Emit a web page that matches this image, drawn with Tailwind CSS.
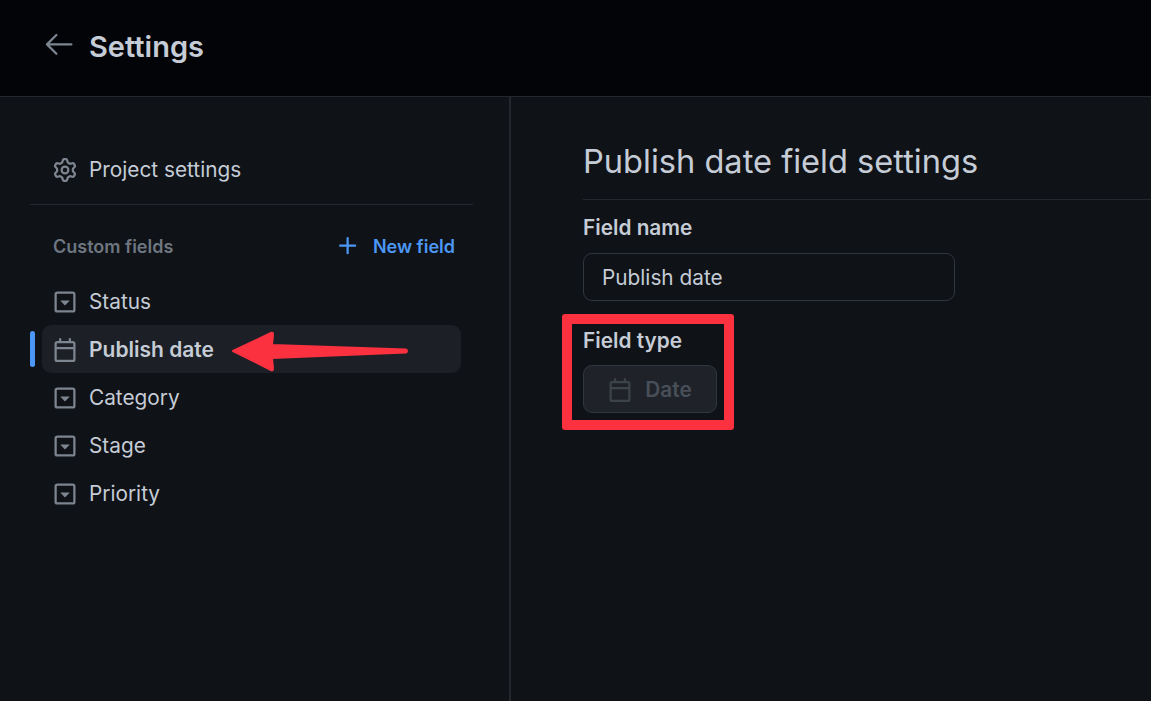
<!doctype html>
<html lang="en">
<head>
<meta charset="UTF-8" />
<title>Settings</title>
<script src="https://cdn.jsdelivr.net/npm/@tailwindcss/browser@4"></script>
</head>
<body class="relative w-[1151px] h-[701px] overflow-hidden bg-[#0f1216] font-['Inter','Liberation_Sans',sans-serif] text-[#c5ccd6]">
  <!-- header -->
  <header class="h-[97px] bg-[#020408] border-b border-[#24282e] flex items-center pl-[41px] pb-[3px]">
    <svg class="w-[36px] h-[36px] fill-[#7d8590] -mt-[6px]" viewBox="0 0 24 24"><path d="M10.78 19.03a.75.75 0 0 1-1.06 0l-6.25-6.25a.75.75 0 0 1 0-1.06l6.25-6.25a.749.749 0 0 1 1.275.326.749.749 0 0 1-.215.734L5.81 11.5h14.44a.75.75 0 0 1 0 1.5H5.81l4.97 4.97a.75.75 0 0 1 0 1.06Z"/></svg>
    <h1 class="ml-[12px] text-[29px] font-semibold leading-[36px]">Settings</h1>
  </header>

  <div class="flex h-[604px]">
    <!-- sidebar -->
    <aside class="w-[511px] shrink-0 border-r-2 border-[#24282e] pt-[49px] pl-[30px] pr-[36px]">
      <div class="flex items-center h-[48px] pl-[23px] text-[20.8px]">
        <svg class="w-[24px] h-[24px] fill-[#7d8590]" viewBox="0 0 16 16"><path d="M8 0a8.2 8.2 0 0 1 .701.031C9.444.095 9.99.645 10.16 1.29l.288 1.107c.018.066.079.158.212.224.231.114.454.243.668.386.123.082.233.09.299.071l1.103-.303c.644-.176 1.392.021 1.82.63.27.385.506.792.704 1.218.315.675.111 1.422-.364 1.891l-.814.806c-.049.048-.098.147-.088.294.016.257.016.515 0 .772-.01.147.038.246.088.294l.814.806c.475.469.679 1.216.364 1.891a7.977 7.977 0 0 1-.704 1.217c-.428.61-1.176.807-1.82.63l-1.102-.302c-.067-.019-.177-.011-.3.071a5.909 5.909 0 0 1-.668.386c-.133.066-.194.158-.211.224l-.29 1.106c-.168.646-.715 1.196-1.458 1.26a8.006 8.006 0 0 1-1.402 0c-.743-.064-1.289-.614-1.458-1.26l-.289-1.106c-.018-.066-.079-.158-.212-.224a5.738 5.738 0 0 1-.668-.386c-.123-.082-.233-.09-.299-.071l-1.103.303c-.644.176-1.392-.021-1.82-.63a8.12 8.12 0 0 1-.704-1.218c-.315-.675-.111-1.422.363-1.891l.815-.806c.05-.048.098-.147.088-.294a6.214 6.214 0 0 1 0-.772c.01-.147-.038-.246-.088-.294l-.815-.806C.635 6.045.431 5.298.746 4.623a7.92 7.92 0 0 1 .704-1.217c.428-.61 1.176-.807 1.82-.63l1.102.302c.067.019.177.011.3-.071.214-.143.437-.272.668-.386.133-.066.194-.158.211-.224l.29-1.106C6.009.645 6.556.095 7.299.03 7.53.01 7.764 0 8 0Zm-.571 1.525c-.036.003-.108.036-.137.146l-.289 1.105c-.147.561-.549.967-.998 1.189-.173.086-.34.183-.5.29-.417.278-.97.423-1.529.27l-1.103-.303c-.109-.03-.175.016-.195.045-.22.312-.412.644-.573.99-.014.031-.021.11.059.19l.815.806c.411.406.562.957.53 1.456a4.709 4.709 0 0 0 0 .582c.032.499-.119 1.05-.53 1.456l-.815.806c-.081.08-.073.159-.059.19.162.346.353.677.573.989.02.03.085.076.195.046l1.102-.303c.56-.153 1.113-.008 1.53.27.161.107.328.204.501.29.447.222.85.629.997 1.189l.289 1.105c.029.109.101.143.137.146a6.6 6.6 0 0 0 1.142 0c.036-.003.108-.036.137-.146l.289-1.105c.147-.561.549-.967.998-1.189.173-.086.34-.183.5-.29.417-.278.97-.423 1.529-.27l1.103.303c.109.029.175-.016.195-.045.22-.313.411-.644.573-.99.014-.031.021-.11-.059-.19l-.815-.806c-.411-.406-.562-.957-.53-1.456a4.709 4.709 0 0 0 0-.582c-.032-.499.119-1.05.53-1.456l.815-.806c.081-.08.073-.159.059-.19a6.464 6.464 0 0 0-.573-.989c-.02-.03-.085-.076-.195-.046l-1.102.303c-.56.153-1.113.008-1.53-.27a4.44 4.44 0 0 0-.501-.29c-.447-.222-.85-.629-.997-1.189l-.289-1.105c-.029-.11-.101-.143-.137-.146a6.6 6.6 0 0 0-1.142 0ZM11 8a3 3 0 1 1-6 0 3 3 0 0 1 6 0ZM9.5 8a1.5 1.5 0 1 0-3.001.001A1.5 1.5 0 0 0 9.5 8Z"/></svg>
        <span class="ml-[12px]">Project settings</span>
      </div>
      <div class="mt-[10px] border-t border-[#24282e]"></div>

      <div class="flex items-center justify-between h-[48px] mt-[17px] pl-[23px] pr-[18px] text-[18px] font-semibold">
        <span class="text-[#6e7681]">Custom fields</span>
        <span class="flex items-center text-[#4c97f5]">
          <svg class="w-[24px] h-[24px] fill-[#4c97f5]" viewBox="0 0 16 16"><path d="M7.75 2a.75.75 0 0 1 .75.75V7h4.25a.75.75 0 0 1 0 1.5H8.5v4.25a.75.75 0 0 1-1.5 0V8.5H2.75a.75.75 0 0 1 0-1.5H7V2.75A.75.75 0 0 1 7.75 2Z"/></svg>
          <span class="ml-[13px]">New field</span>
        </span>
      </div>

      <ul class="mt-[7px] text-[20.8px]">
        <li class="flex items-center h-[48px] pl-[23px] pt-[2px]">
          <svg class="w-[24px] h-[24px] fill-[#7d8590]" viewBox="0 0 16 16"><path d="m5.06 7.356 2.795 2.833c.08.081.21.081.29 0l2.794-2.833c.13-.131.038-.356-.145-.356H5.206c-.183 0-.275.225-.145.356Z"/><path d="M1 2.75C1 1.784 1.784 1 2.75 1h10.5c.966 0 1.75.784 1.75 1.75v10.5A1.75 1.75 0 0 1 13.25 15H2.75A1.75 1.75 0 0 1 1 13.25Zm1.75-.25a.25.25 0 0 0-.25.25v10.5c0 .138.112.25.25.25h10.5a.25.25 0 0 0 .25-.25V2.75a.25.25 0 0 0-.25-.25Z"/></svg>
          <span class="ml-[12px]">Status</span>
        </li>
        <li class="relative flex items-center h-[48px] ml-[12px] mr-[12px] pl-[11px] pt-[2px] rounded-[9px] bg-[#1c1f25] font-semibold text-[21px]">
          <span class="absolute -left-[12px] top-[6px] w-[5px] h-[36px] rounded-full bg-[#4c97f5]"></span>
          <svg class="w-[24px] h-[24px] fill-[#7d8590]" viewBox="0 0 16 16"><path d="M4.75 0a.75.75 0 0 1 .75.75V2h5V.75a.75.75 0 0 1 1.5 0V2h1.25c.966 0 1.75.784 1.75 1.75v10.5A1.75 1.75 0 0 1 13.25 16H2.75A1.75 1.75 0 0 1 1 14.25V3.75C1 2.784 1.784 2 2.75 2H4V.75A.75.75 0 0 1 4.75 0ZM2.5 7.5v6.75c0 .138.112.25.25.25h10.5a.25.25 0 0 0 .25-.25V7.5Zm10.75-4H2.75a.25.25 0 0 0-.25.25V6h11V3.75a.25.25 0 0 0-.25-.25Z"/></svg>
          <span class="ml-[12px]">Publish date</span>
        </li>
        <li class="flex items-center h-[48px] pl-[23px] pt-[2px]">
          <svg class="w-[24px] h-[24px] fill-[#7d8590]" viewBox="0 0 16 16"><path d="m5.06 7.356 2.795 2.833c.08.081.21.081.29 0l2.794-2.833c.13-.131.038-.356-.145-.356H5.206c-.183 0-.275.225-.145.356Z"/><path d="M1 2.75C1 1.784 1.784 1 2.75 1h10.5c.966 0 1.75.784 1.75 1.75v10.5A1.75 1.75 0 0 1 13.25 15H2.75A1.75 1.75 0 0 1 1 13.25Zm1.75-.25a.25.25 0 0 0-.25.25v10.5c0 .138.112.25.25.25h10.5a.25.25 0 0 0 .25-.25V2.75a.25.25 0 0 0-.25-.25Z"/></svg>
          <span class="ml-[12px]">Category</span>
        </li>
        <li class="flex items-center h-[48px] pl-[23px] pt-[2px]">
          <svg class="w-[24px] h-[24px] fill-[#7d8590]" viewBox="0 0 16 16"><path d="m5.06 7.356 2.795 2.833c.08.081.21.081.29 0l2.794-2.833c.13-.131.038-.356-.145-.356H5.206c-.183 0-.275.225-.145.356Z"/><path d="M1 2.75C1 1.784 1.784 1 2.75 1h10.5c.966 0 1.75.784 1.75 1.75v10.5A1.75 1.75 0 0 1 13.25 15H2.75A1.75 1.75 0 0 1 1 13.25Zm1.75-.25a.25.25 0 0 0-.25.25v10.5c0 .138.112.25.25.25h10.5a.25.25 0 0 0 .25-.25V2.75a.25.25 0 0 0-.25-.25Z"/></svg>
          <span class="ml-[12px]">Stage</span>
        </li>
        <li class="flex items-center h-[48px] pl-[23px] pt-[2px]">
          <svg class="w-[24px] h-[24px] fill-[#7d8590]" viewBox="0 0 16 16"><path d="m5.06 7.356 2.795 2.833c.08.081.21.081.29 0l2.794-2.833c.13-.131.038-.356-.145-.356H5.206c-.183 0-.275.225-.145.356Z"/><path d="M1 2.75C1 1.784 1.784 1 2.75 1h10.5c.966 0 1.75.784 1.75 1.75v10.5A1.75 1.75 0 0 1 13.25 15H2.75A1.75 1.75 0 0 1 1 13.25Zm1.75-.25a.25.25 0 0 0-.25.25v10.5c0 .138.112.25.25.25h10.5a.25.25 0 0 0 .25-.25V2.75a.25.25 0 0 0-.25-.25Z"/></svg>
          <span class="ml-[12px]">Priority</span>
        </li>
      </ul>
    </aside>

    <!-- main -->
    <main class="flex-1 pl-[72px] pt-[42px]">
      <h2 class="text-[32.6px] leading-[44px] pb-[16px] border-b border-[#24282e]">Publish date field settings</h2>
      <label class="block mt-[14px] text-[20.8px] leading-[28px] font-semibold">Field name</label>
      <div class="mt-[11px] w-[372px] h-[48px] flex items-center pl-[18px] pt-[1px] border border-[#30363d] rounded-[9px] text-[20.8px]">Publish date</div>
      <label class="block mt-[26px] text-[20.8px] leading-[28px] font-semibold">Field type</label>
      <div class="mt-[10px] w-[134px] h-[48px] flex items-center justify-center pt-[1px] border border-[#30363d] rounded-[9px] bg-[#1f2329] text-[20.8px] font-semibold text-[#484f58]">
        <svg class="w-[24px] h-[24px] fill-[#3d434b]" viewBox="0 0 16 16"><path d="M4.75 0a.75.75 0 0 1 .75.75V2h5V.75a.75.75 0 0 1 1.5 0V2h1.25c.966 0 1.75.784 1.75 1.75v10.5A1.75 1.75 0 0 1 13.25 16H2.75A1.75 1.75 0 0 1 1 14.25V3.75C1 2.784 1.784 2 2.75 2H4V.75A.75.75 0 0 1 4.75 0ZM2.5 7.5v6.75c0 .138.112.25.25.25h10.5a.25.25 0 0 0 .25-.25V7.5Zm10.75-4H2.75a.25.25 0 0 0-.25.25V6h11V3.75a.25.25 0 0 0-.25-.25Z"/></svg>
        <span class="ml-[13px]">Date</span>
      </div>
    </main>
  </div>

  <!-- annotations over the screenshot -->
  <div class="absolute left-[562px] top-[314px] w-[172px] h-[116px] border-[10px] border-[#fb3140] rounded-[3px]"></div>
  <svg class="absolute left-[225px] top-[325px]" width="190" height="50" viewBox="0 0 190 50"><path d="M8 26 L46 8 Q48 7 48 9.500 L47 20 L181 24.500 Q183 26 181 27.500 L47 33 L48 43.500 Q48 46 46 45 Z" fill="#fb3140" stroke="#fb3140" stroke-width="2" stroke-linejoin="round"/></svg>
</body>
</html>
